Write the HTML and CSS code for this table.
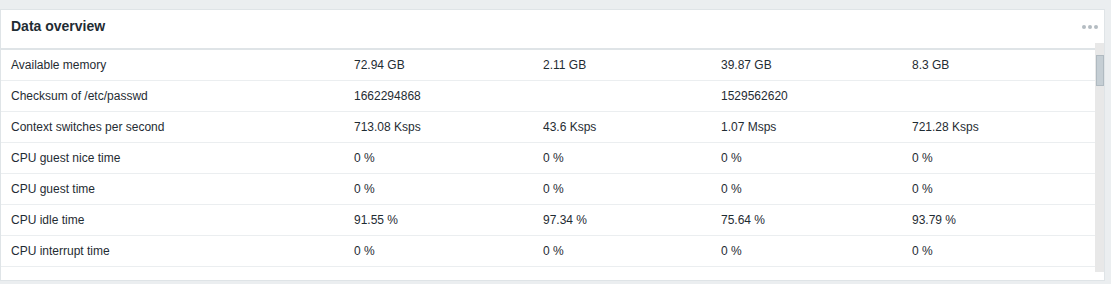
FILE: index.html
```html
<!DOCTYPE html>
<html lang="en">
<head>
<meta charset="utf-8">
<title>Data overview</title>
<link rel="stylesheet" href="styles.css">
</head>
<body>
<div class="widget">
  <div class="widget-head">
    <h4 class="widget-title">Data overview</h4>
    <button class="widget-menu" aria-label="Actions">
      <svg width="16" height="4" viewBox="0 0 16 4"><circle cx="2" cy="2" r="2"/><circle cx="8" cy="2" r="2"/><circle cx="14" cy="2" r="2"/></svg>
    </button>
  </div>
  <div class="widget-body">
    <div class="table-area">
      <table class="overview">
        <colgroup><col class="c1"><col class="c2"><col class="c3"><col class="c4"><col class="c5"></colgroup>
        <thead><tr><th></th><th></th><th></th><th></th><th></th></tr></thead>
        <tbody>
          <tr><td>Available memory</td><td>72.94 GB</td><td>2.11 GB</td><td>39.87 GB</td><td>8.3 GB</td></tr>
          <tr><td>Checksum of /etc/passwd</td><td>1662294868</td><td></td><td>1529562620</td><td></td></tr>
          <tr><td>Context switches per second</td><td>713.08 Ksps</td><td>43.6 Ksps</td><td>1.07 Msps</td><td>721.28 Ksps</td></tr>
          <tr><td>CPU guest nice time</td><td>0 %</td><td>0 %</td><td>0 %</td><td>0 %</td></tr>
          <tr><td>CPU guest time</td><td>0 %</td><td>0 %</td><td>0 %</td><td>0 %</td></tr>
          <tr><td>CPU idle time</td><td>91.55 %</td><td>97.34 %</td><td>75.64 %</td><td>93.79 %</td></tr>
          <tr><td>CPU interrupt time</td><td>0 %</td><td>0 %</td><td>0 %</td><td>0 %</td></tr>
        </tbody>
      </table>
    </div>
    <div class="scrollbar" aria-hidden="true">
      <div class="scroll-thumb"></div>
    </div>
  </div>
</div>
</body>
</html>
```

FILE: styles.css
```css
html, body {
  margin: 0;
  padding: 0;
  background: #ebeef0;
  font-family: "Liberation Sans", Arial, sans-serif;
  color: #1f2c33;
}

.widget {
  margin-top: 9px;
  width: 1103px;
  height: 270px;
  background: #ffffff;
  border: 1px solid #dfe4e7;
  display: flex;
  flex-direction: column;
}

.widget-head {
  height: 33px;
  flex: 0 0 33px;
  display: flex;
  align-items: center;
  justify-content: space-between;
  padding: 0 6px 0 10px;
}

.widget-title {
  margin: 0;
  font-size: 14px;
  font-weight: bold;
  line-height: 17px;
  color: #1f2c33;
}

.widget-menu {
  border: 0;
  padding: 0;
  margin: 0;
  background: none;
  display: flex;
  align-items: center;
  height: 16px;
  cursor: pointer;
}

.widget-menu svg {
  display: block;
  fill: #b4bcc2;
}

.widget-body {
  height: 229px;
  flex: 0 0 229px;
  display: flex;
}

.table-area {
  width: 1094px;
  flex: 0 0 1094px;
  overflow: hidden;
}

.scrollbar {
  width: 9px;
  flex: 0 0 9px;
  background: #e8e8e8;
  padding-top: 12px;
  box-sizing: border-box;
}

.scroll-thumb {
  height: 31px;
  margin-left: 1px;
  box-sizing: border-box;
  background: #c5ced4;
  border: 1px solid #b0bac1;
}

.overview {
  width: 1094px;
  table-layout: fixed;
  border-collapse: collapse;
  font-size: 12px;
}

.c1 { width: 343px; }
.c2 { width: 189px; }
.c3 { width: 178px; }
.c4 { width: 191px; }
.c5 { width: 193px; }

.overview thead th {
  height: 5px;
  padding: 0;
  border-bottom: 2px solid #dfe4e7;
}

.overview td {
  height: 30px;
  padding: 0 10px;
  border-bottom: 1px solid #ebeef0;
  white-space: nowrap;
  overflow: hidden;
  line-height: 14px;
  vertical-align: middle;
  color: #1f2c33;
}
```
